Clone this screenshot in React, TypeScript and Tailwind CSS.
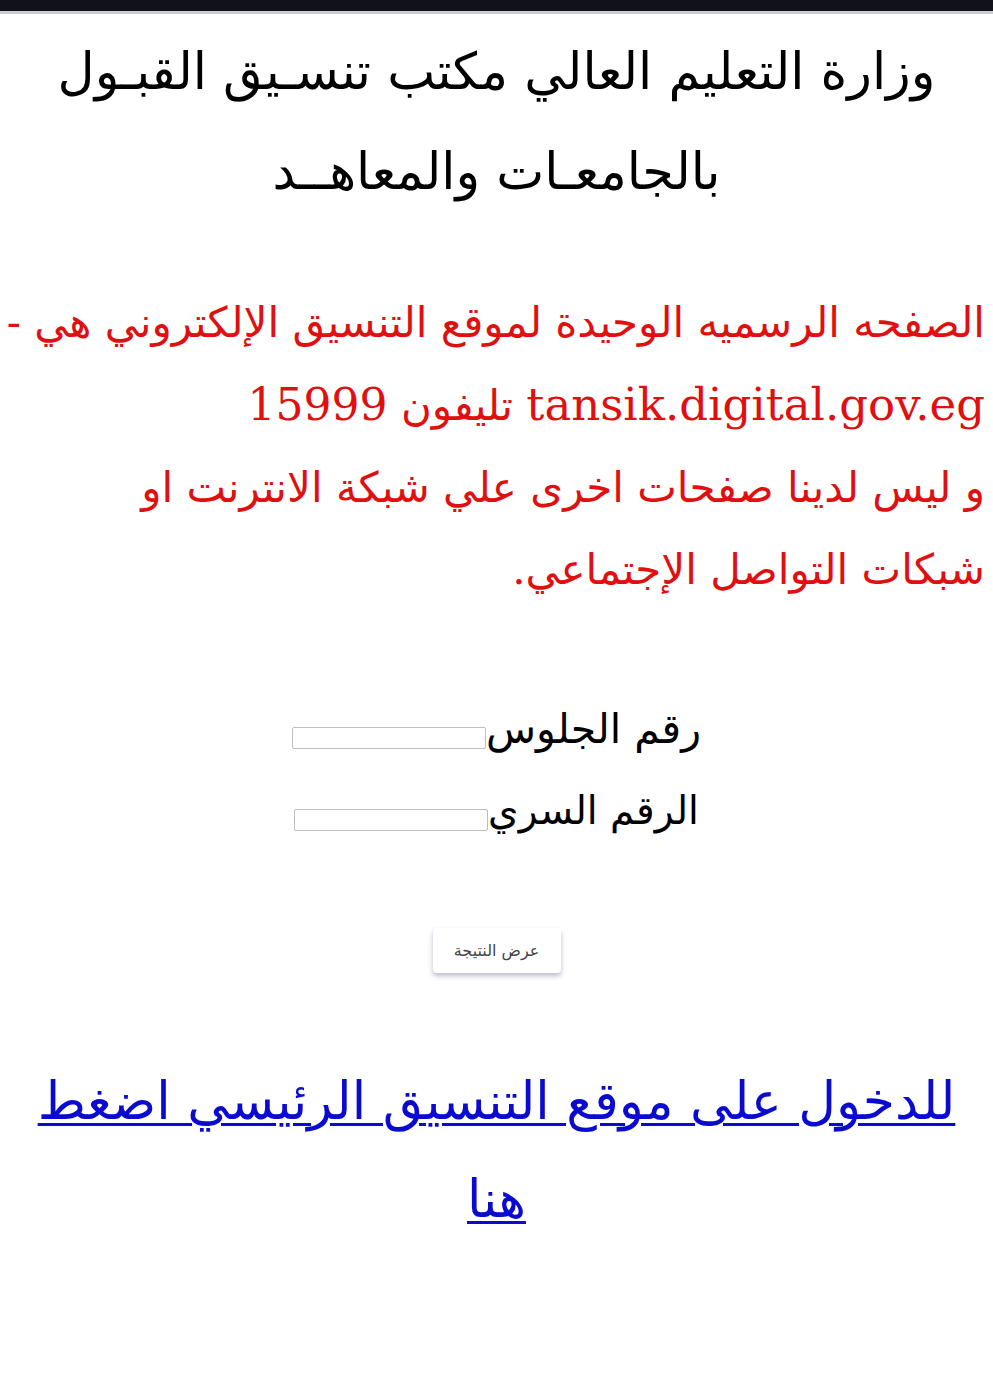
export default function App() {
  return (
    <div dir="rtl" className="min-h-[1400px] bg-white" style={{ fontFamily: '"DejaVu Sans", sans-serif' }}>
      <div className="h-[11px] bg-[#111218]" />
      <div className="h-[3px] bg-[#c9cbd3]" />

      <h1 className="mt-[8px] px-[20px] text-center text-[51px] leading-[100px] font-normal text-black">
        وزارة التعليم العالي مكتب تنسـيق القبـول
        <br />
        بالجامعـات والمعاهــد
      </h1>

      <div className="mt-[60px] pr-[8px] pl-[4px] text-right text-[42px] leading-[82px] text-[#e01010] font-['DejaVu_Serif','DejaVu_Sans',serif]">
        <p>
          الصفحه الرسميه الوحيدة لموقع التنسيق الإلكتروني هي -
          <br />
          <span className="text-[45px]">tansik.digital.gov.eg</span> تليفون <span className="text-[44px]">15999</span>
        </p>
        <p>
          و ليس لدينا صفحات اخرى علي شبكة الانترنت او
          <br />
          شبكات التواصل الإجتماعي.
        </p>
      </div>

      <form className="mt-[90px] flex flex-col items-center gap-[26px]" onSubmit={(e) => e.preventDefault()}>
        <div className="flex items-end justify-center">
          <label className="text-[41px] leading-[56px] text-black">رقم الجلوس</label>
          <input type="text" className="mb-[8px] h-[22px] w-[194px] rounded-[2px] border border-[#bdbdbd] bg-white" />
        </div>
        <div className="flex items-end justify-center">
          <label className="text-[39px] leading-[56px] text-black">الرقم السري</label>
          <input type="password" className="mb-[8px] h-[22px] w-[194px] rounded-[2px] border border-[#bdbdbd] bg-white" />
        </div>
        <button
          type="submit"
          className="mt-[63px] h-[45px] w-[128px] rounded-[4px] bg-white text-[16px] text-[#444] shadow-[0_3px_5px_rgba(70,60,110,0.35)]"
        >
          عرض النتيجة
        </button>
      </form>

      <div className="mt-[79px] px-[30px] text-center text-[52px] leading-[98px]">
        <a href="#" className="text-[#0a0ad0] underline decoration-[3px] underline-offset-[4px]">
          للدخول على موقع التنسيق الرئيسي اضغط هنا
        </a>
      </div>
    </div>
  );
}
